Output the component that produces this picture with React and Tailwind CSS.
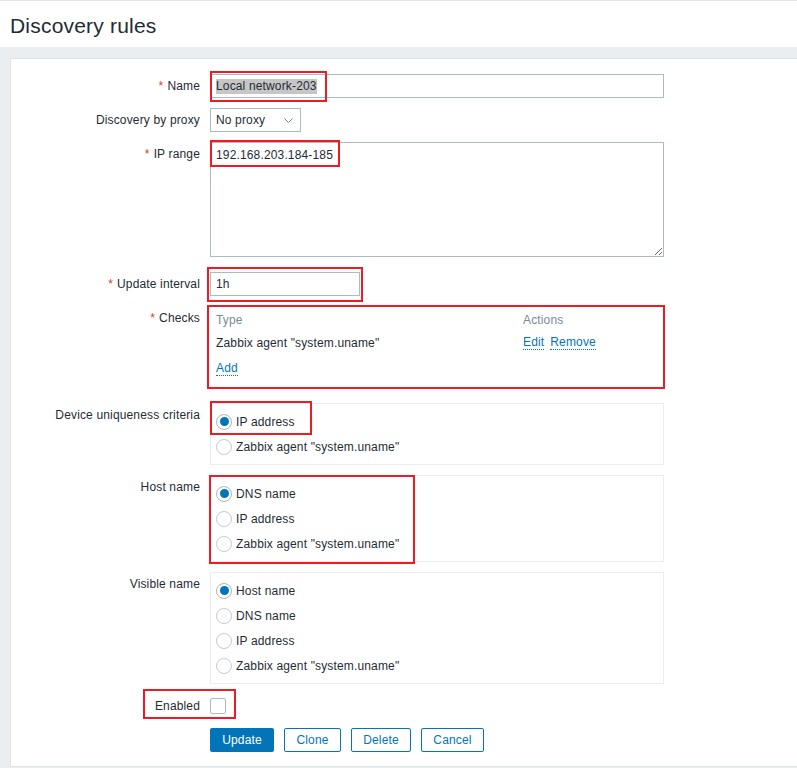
import React from 'react';

const Label = ({ children, required }) => (
  <div className="w-[189px] shrink-0 pr-0 text-right leading-[14px] pt-[5px]">
    {required && <span className="text-[#e33734] mr-[4px]">*</span>}
    {children}
  </div>
);

const Row = ({ label, required, className = '', children }) => (
  <div className={`flex ${className}`}>
    <Label required={required}>{label}</Label>
    <div className="ml-[10px]">{children}</div>
  </div>
);

const Radio = ({ checked, children }) => (
  <div className="flex items-center h-[25px]">
    <span
      className={`ml-[4px] w-[16px] h-[16px] rounded-full border bg-white flex items-center justify-center ${
        checked ? 'border-[#a8b6bd]' : 'border-[#c3ccd1]'
      }`}
    >
      {checked && <span className="w-[9px] h-[9px] rounded-full bg-[#0275b8]" />}
    </span>
    <span className="ml-[4px]">{children}</span>
  </div>
);

const RadioBox = ({ options, selected }) => (
  <div className="w-[454px] border border-[#ebeef0] px-[1px] py-[5px]">
    {options.map((o, i) => (
      <Radio key={o} checked={i === selected}>{o}</Radio>
    ))}
  </div>
);

const DotLink = ({ children, className = '' }) => (
  <span className={`text-[#0275b8] border-b border-dotted border-[#0275b8] leading-[13px] ${className}`}>
    {children}
  </span>
);

const RedBox = ({ className }) => (
  <div className={`absolute border-2 border-[#ed1c24] pointer-events-none ${className}`} />
);

export default function App() {
  return (
    <div className="relative w-[797px] h-[768px] overflow-hidden bg-[#ebeef0] text-[12px] tracking-[0.15px] text-[#1f2c33] font-['Liberation_Sans',Arial,sans-serif]">
      <header className="h-[47px] bg-white border-t border-[#e3e7ea] flex items-center px-[10px]">
        <h1 className="text-[21px] leading-[24px] mt-[3px] tracking-[0.2px]">Discovery rules</h1>
      </header>

      <main className="pl-[10px] pt-[11px]">
        <div className="bg-white border border-r-0 border-[#dfe4e7] h-[709px] flex flex-col">
          <Row label="Name" required className="mt-[15px]">
            <div className="w-[454px] h-[24px] border border-[#acbbc2] flex items-center px-[5px]">
              <span className="bg-[#c6c6c6] leading-[15px]">Local network-203</span>
            </div>
          </Row>

          <Row label="Discovery by proxy" className="mt-[10px]">
            <div className="w-[91px] h-[24px] border border-[#acbbc2] flex items-center justify-between pl-[5px] pr-[7px]">
              <span>No proxy</span>
              <svg width="9" height="6" viewBox="0 0 9 6" className="mt-[1px]">
                <polyline points="0.5,0.5 4.5,4.5 8.5,0.5" fill="none" stroke="#768d99" strokeWidth="1" />
              </svg>
            </div>
          </Row>

          <Row label="IP range" required className="mt-[10px]">
            <textarea
              readOnly
              defaultValue="192.168.203.184-185"
              className="block w-[454px] h-[115px] border border-[#acbbc2] px-[5px] py-[4px] leading-[16px] outline-none"
            />
          </Row>

          <Row label="Update interval" required className="mt-[15px]">
            <div className="w-[150px] h-[24px] border border-[#acbbc2] flex items-center px-[5px]">1h</div>
          </Row>

          <Row label="Checks" required className="mt-[10px]">
            <div className="w-[454px] pt-[5px] pb-[10px] px-[6px]">
              <div className="flex h-[18px] items-center text-[#768d99]">
                <span className="w-[307px]">Type</span>
                <span>Actions</span>
              </div>
              <div className="flex h-[18px] items-center mt-[5px]">
                <span className="w-[307px]">Zabbix agent "system.uname"</span>
                <DotLink>Edit</DotLink>
                <DotLink className="ml-[6px]">Remove</DotLink>
              </div>
              <div className="flex h-[18px] items-center mt-[8px]">
                <DotLink>Add</DotLink>
              </div>
            </div>
          </Row>

          <Row label="Device uniqueness criteria" className="mt-[15px]">
            <RadioBox options={['IP address', 'Zabbix agent "system.uname"']} selected={0} />
          </Row>

          <Row label="Host name" className="mt-[10px]">
            <RadioBox options={['DNS name', 'IP address', 'Zabbix agent "system.uname"']} selected={0} />
          </Row>

          <Row label="Visible name" className="mt-[10px]">
            <RadioBox
              options={['Host name', 'DNS name', 'IP address', 'Zabbix agent "system.uname"']}
              selected={0}
            />
          </Row>

          <div className="flex mt-[14px] items-center h-[16px]">
            <div className="w-[189px] text-right">Enabled</div>
            <span className="ml-[10px] w-[16px] h-[16px] border border-[#acbbc2] rounded-[2px] bg-white" />
          </div>

          <div className="flex mt-[14px] ml-[199px] gap-[10px]">
            <button className="w-[64px] h-[24px] rounded-[2px] bg-[#0275b8] text-white">Update</button>
            <button className="w-[57px] h-[24px] rounded-[2px] border border-[#0275b8] text-[#0275b8] bg-white">Clone</button>
            <button className="w-[60px] h-[24px] rounded-[2px] border border-[#0275b8] text-[#0275b8] bg-white">Delete</button>
            <button className="w-[63px] h-[24px] rounded-[2px] border border-[#0275b8] text-[#0275b8] bg-white">Cancel</button>
          </div>
        </div>
      </main>

      <RedBox className="left-[210px] top-[71px] w-[117px] h-[31px]" />
      <RedBox className="left-[210px] top-[140px] w-[130px] h-[27px]" />
      <RedBox className="left-[207px] top-[267px] w-[156px] h-[35px]" />
      <RedBox className="left-[207px] top-[305px] w-[458px] h-[84px]" />
      <RedBox className="left-[210px] top-[401px] w-[102px] h-[34px]" />
      <RedBox className="left-[209px] top-[475px] w-[206px] h-[89px]" />
      <RedBox className="left-[143px] top-[689px] w-[93px] h-[30px]" />
    </div>
  );
}
